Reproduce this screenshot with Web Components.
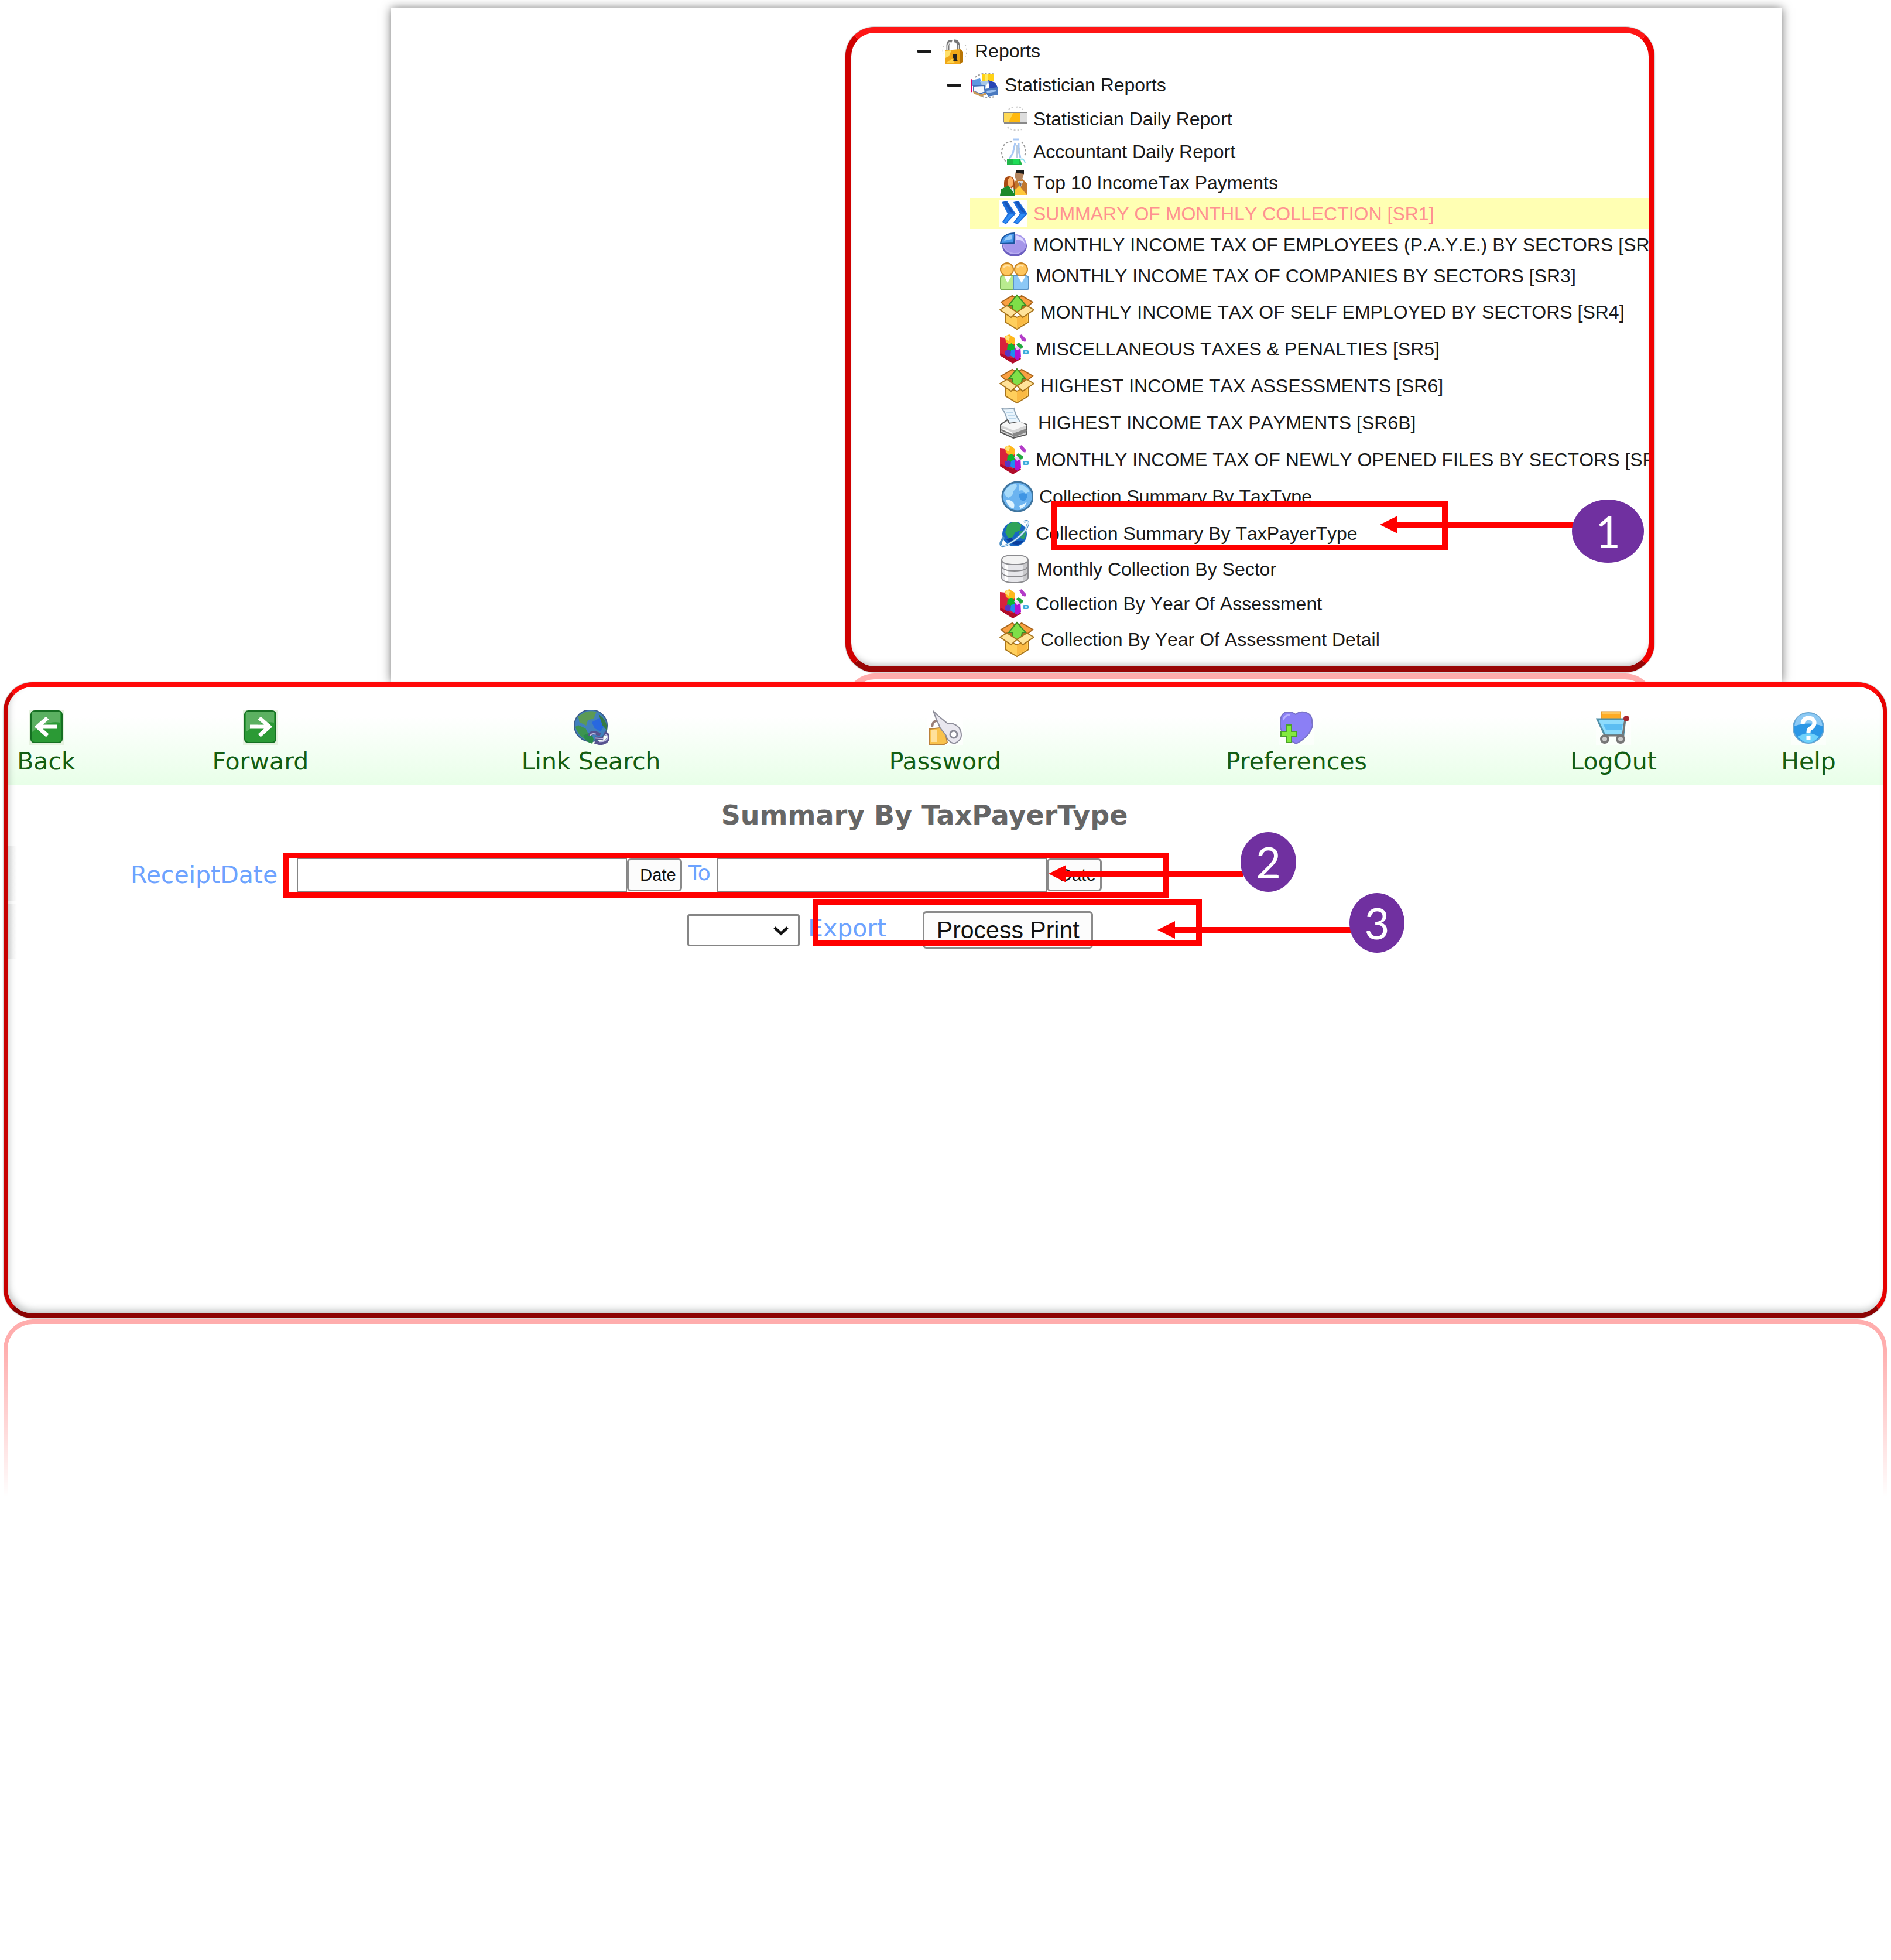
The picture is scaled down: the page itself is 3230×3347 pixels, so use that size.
<!DOCTYPE html>
<html lang="en">
<head>
<meta charset="utf-8">
<title>Summary By TaxPayerType</title>
<style>
html,body{margin:0;padding:0;background:#fff}
body{position:relative;min-height:100vh;font-family:"Liberation Sans",Arial,sans-serif;color:#1a1a1a}
</style>
</head>
<body>
<report-slide>
  <report-tree>
    <tree-row level="1" size="md" icon="lock">Reports</tree-row>
    <tree-row level="2" size="md" icon="stats">Statistician Reports</tree-row>
    <tree-row size="md" icon="card">Statistician Daily Report</tree-row>
    <tree-row size="sm" icon="flask">Accountant Daily Report</tree-row>
    <tree-row size="sm" icon="people">Top 10 IncomeTax Payments</tree-row>
    <tree-row size="sm" icon="chevrons" selected>SUMMARY OF MONTHLY COLLECTION [SR1]</tree-row>
    <tree-row size="sm" icon="pie">MONTHLY INCOME TAX OF EMPLOYEES (P.A.Y.E.) BY SECTORS [SR2]</tree-row>
    <tree-row size="sm" icon="couple">MONTHLY INCOME TAX OF COMPANIES BY SECTORS [SR3]</tree-row>
    <tree-row size="lg" icon="box" class="group">MONTHLY INCOME TAX OF SELF EMPLOYED BY SECTORS [SR4]</tree-row>
    <tree-row size="lg" icon="blocks">MISCELLANEOUS TAXES &amp; PENALTIES [SR5]</tree-row>
    <tree-row size="lg" icon="box">HIGHEST INCOME TAX ASSESSMENTS [SR6]</tree-row>
    <tree-row size="lg" icon="printer">HIGHEST INCOME TAX PAYMENTS [SR6B]</tree-row>
    <tree-row size="lg" icon="blocks">MONTHLY INCOME TAX OF NEWLY OPENED FILES BY SECTORS [SR</tree-row>
    <tree-row size="lg" icon="world">Collection Summary By TaxType</tree-row>
    <tree-row size="lg" icon="orbit">Collection Summary By TaxPayerType</tree-row>
    <tree-row size="db" icon="database">Monthly Collection By Sector</tree-row>
    <tree-row size="md" icon="blocks">Collection By Year Of Assessment</tree-row>
    <tree-row size="lg" icon="box">Collection By Year Of Assessment Detail</tree-row>
  </report-tree>
</report-slide>

<summary-panel>
  <tool-bar slot="tools">
    <tool-item icon="back">Back</tool-item>
    <tool-item icon="forward">Forward</tool-item>
    <tool-item icon="linksearch">Link Search</tool-item>
    <tool-item icon="password">Password</tool-item>
    <tool-item icon="heart">Preferences</tool-item>
    <tool-item icon="cart">LogOut</tool-item>
    <tool-item icon="help">Help</tool-item>
  </tool-bar>
  <summary-form>Summary By TaxPayerType</summary-form>
</summary-panel>

<mark-box style="left:1796px;top:856px;width:677px;height:84px"></mark-box>
<mark-arrow style="left:2357px;top:881px;width:332px"></mark-arrow>
<step-badge style="left:2685px;top:853px;width:123px;height:108px">1</step-badge>

<mark-box style="left:483px;top:1456px;width:1514px;height:78px"></mark-box>
<mark-arrow style="left:1791px;top:1477px;width:332px"></mark-arrow>
<step-badge style="left:2119px;top:1421px;width:95px;height:102px">2</step-badge>

<mark-box style="left:1388px;top:1536px;width:665px;height:79px"></mark-box>
<mark-arrow style="left:1977px;top:1573px;width:332px"></mark-arrow>
<step-badge style="left:2305px;top:1525px;width:94px;height:102px">3</step-badge>

<script>
/* Icon artwork: [width, height, markup]. */
const box = `<path d="M10 32v16l20 12 20-12V32L30 40z" fill="#ffcf5c" stroke="#a8741c" stroke-width="2"/>
<path d="M30 40v18l18-11V33z" fill="#f6ab33" opacity=".6"/>
<path d="M3 14 22 3l8 5 8-5 19 11-14 12H16z" fill="#f9a042" stroke="#a8651c" stroke-width="2"/>
<path d="M14 20 30 9l16 11-16 10z" fill="#b5742a"/>
<path d="M30 2 16 19h6l2 12h13l2-12h6z" fill="#7fdf48" stroke="#3c8c26" stroke-width="2"/>
<path d="M1 27l12-7 17 11-10 9zM59 27l-12-7-17 11 10 9z" fill="#ffe39a" stroke="#a8741c" stroke-width="2"/>`;
const blocks = `<path d="M1 6l10 1 15 9v31l-4 3L1 37z" fill="#d8213c"/><path d="M1 37l22 14 14-8-3-6-12 5L2 33z" fill="#b00d2a"/>
<path d="M10 4l7-3 9 6v10l-7 3-8-6z" fill="#ffb81c"/><path d="M13 2l5 3-2 7-6-3z" fill="#ffe37a"/>
<path d="M14 19l7-3 5 4v9l-7 3-6-4z" fill="#12b52c"/><path d="M10 29l6-2 4 3v8l-6 1-5-3z" fill="#5936c4"/>
<path d="M20 28l7-2 4 4v9l-7 2-5-4z" fill="#1f8cf0"/><path d="M26 25l10-2 1 17-6 5-5-3z" fill="#b312d0"/>
<path d="M34 3l4-2 8 9-2 4-5-2z" fill="#b33bc8"/><path d="M29 18l4-3 8 6-2 4-4 1z" fill="#21a83e"/>
<path d="M25 22l6-1 5 4-6 3z" fill="#f3c8ff"/><rect x="40" y="28" width="10" height="7" rx="2" fill="#3cabdc"/><rect x="43" y="30" width="4" height="3" fill="#a7e3f7"/>`;
const ICONS = {
lock:[48,46,`<path d="M12 23V13Q13 5 19 7M30 23V13Q29 5 23 6" fill="none" stroke="#777" stroke-width="5"/><path d="M12 22V14Q14 7 19 8M30 22V13" fill="none" stroke="#ddd" stroke-width="2"/>
<path d="M7 22l26-2 5 4v18l-6 3H8z" fill="#f0a818"/><path d="M8 23l10-1-4 10-6 3z" fill="#ffe06a"/><path d="M8 44l12-8 4 8z" fill="#ffd24a"/><path d="M33 20l5 4v18l-5 3z" fill="#b87505"/><circle cx="24" cy="32" r="4" fill="#222"/><path d="M23 33l-2 8h8l-3-8z" fill="#222"/><path d="M42 12q4 10 0 22M5 14q-3 6-1 14" fill="none" stroke="#aaa" stroke-dasharray="3 4"/>`],
stats:[48,46,`<path d="M8 10Q20 0 42 5M14 40q12 7 26 3" fill="none" stroke="#999" stroke-width="2" stroke-dasharray="3 3"/>
<rect x="20" y="4" width="19" height="12" fill="#ffd216"/><path d="M24 4h6v12h-6z" fill="#ffea62"/><path d="M2 15l14-3 4 9-4 5-13-1z" fill="#5d97e0"/><path d="M16 17h14l-6 14z" fill="#a7c7e8"/><path d="M30 15l12 4 5 10H32z" fill="#2846b4"/><path d="M1 13v22l2 1V14z" fill="#d06"/>
<path d="M5 25l18-1 2 11-9 3-11-4z" fill="#f4f8ff" stroke="#416fb9" stroke-width="2"/><path d="M22 30l24-3v13l-16 3z" fill="#4a79bf"/><path d="M4 33l14 6 8-3v4l-8 3-13-5z" fill="#c99a5a"/><path d="M27 33l17-2v3l-16 3z" fill="#9dc1ef"/>`],
card:[48,46,`<path d="M16 7Q20 1 26 5M28 3q8-2 12 4M14 37q8 8 24 4" fill="none" stroke="#ccc" stroke-width="2" stroke-dasharray="3 3"/><rect x="7" y="12" width="41" height="18" fill="#ddd"/><rect x="8" y="12" width="28" height="16" fill="#ffb90f"/><path d="M8 12h16l-8 16H8z" fill="#ffd955"/><path d="M48 12H7v16" fill="none" stroke="#888" stroke-width="2"/><path d="M8 30h40" stroke="#888" stroke-width="3"/>`],
flask:[48,46,`<path d="M22 6Q5 6 4 24q0 10 10 18M38 6q10 12 5 24" fill="none" stroke="#999" stroke-width="2" stroke-dasharray="4 3"/><path d="M24 2h10M27 8l-4 18-6 9M33 8v12l3 14" fill="none" stroke="#a8c8f5" stroke-width="3"/><path d="M30 12v22M35 16l-4 12" stroke="#bcd" stroke-width="2"/><path d="M13 35h22l4 10H13z" fill="#21b64a"/><path d="M24 36h10v8H24z" fill="#1fdc57"/><path d="M36 36q6-2 8 6" stroke="#8de" fill="none" stroke-width="2"/>`],
people:[48,46,`<path d="M28 4h14v4l-3 9-8 4-5-8z" fill="#b5865f"/><path d="M28 2h14v6l-14-2z" fill="#1b1b1b"/><path d="M26 20l14-3 7 7v20H28z" fill="#c1772e"/><path d="M31 20l5 12 5-12z" fill="#ddd"/><path d="M34 22l4 3-3 9z" fill="#667"/><path d="M26 36l8-8 13 16H27z" fill="#ffc83a"/>
<path d="M8 24q0-12 9-12 9 0 9 14v8l-18-4z" fill="#a94a12"/><ellipse cx="19" cy="22" rx="5" ry="8" fill="#ffb56b"/><path d="M3 34l12-6 5 5 6 1v11H1z" fill="#1d8a2c"/><path d="M16 28l5 5 3-4 1 12z" fill="#eaf6ff"/>`],
chevrons:[48,46,`<rect width="48" height="46" fill="#fff"/><path d="M4 3l9-2 15 22L11 41l-6-4 9-14z" fill="#1c6ddb"/><path d="M24 3l9-2 15 22-17 18-7-3 11-15z" fill="#1c6ddb"/><path d="M7 3l5-1 12 19-5-1zM27 3l5-1 12 19-5-1z" fill="#123f9c" opacity=".5"/><path d="M17 23l8 0-14 16-4-2zM37 23l8 0-14 16-4-2z" fill="#2f8cf5"/>`],
pie:[48,46,`<ellipse cx="26" cy="25" rx="21" ry="18" fill="#6c5fc0"/><ellipse cx="26" cy="22" rx="20" ry="17" fill="#b9aef0"/><path d="M28 5v17H7q2 13 18 15Q44 38 46 22 45 7 28 5z" fill="#a596ea"/><path d="M28 7q14 2 15 14-5-8-15-7z" fill="#ddd8ff"/><path d="M2 21Q4 4 26 3l-1 17z" fill="#4b9aec" stroke="#1b559f" stroke-width="2"/><path d="M8 16Q12 7 22 6v7z" fill="#9ccdf9"/>`],
couple:[52,48,`<path d="M2 28q0-4 4-4h18v23H3q-1 0-1-3z" fill="#b9eb8f" stroke="#78b054" stroke-width="2"/><path d="M24 47V24h21q5 0 5 5v15q0 3-2 3z" fill="#8cc8f6" stroke="#5a92c4" stroke-width="2"/><path d="M8 24l6 12 7-12z" fill="#fff"/><path d="M31 24l7 12 7-12z" fill="#fff"/><circle cx="13" cy="13" r="11" fill="#ffc65e" stroke="#c88626" stroke-width="2"/><circle cx="37" cy="13" r="11" fill="#ffc65e" stroke="#c88626" stroke-width="2"/><path d="M7 10q5-6 11-2M30 10q5-6 11-2" stroke="#ffe2a6" stroke-width="3" fill="none"/>`],
box:[60,62,box],
blocks:[52,52,blocks],
printer:[56,54,`<path d="M5 3q10 1 20-1 2 12 11 24l-22 4Q13 14 5 3z" fill="#eaf5fd" stroke="#90a4b5" stroke-width="2"/><path d="M12 10h12M14 15h12M16 20h13" stroke="#bcd8ec" stroke-width="2"/><path d="M2 30l12-8 3 6 16-2 14 4v17L24 53 2 43z" fill="#d4d4d4" stroke="#555" stroke-width="2"/><path d="M2 31l22 9 23-9-12-6-18 4-4-4z" fill="#f6f6f6"/><path d="M3 39l20 9 24-8" fill="none" stroke="#777" stroke-width="2"/><path d="M24 45l22-8v6l-22 9z" fill="#888"/><path d="M7 38l14 6" stroke="#fff" stroke-width="2"/>`],
world:[58,54,`<ellipse cx="31" cy="27" rx="26" ry="25" fill="#6cb4f0" stroke="#3f759f" stroke-width="3"/><path d="M8 20Q14 7 28 5q3 3 1 7l-5 6-2 7-6 4q-6-1-8-9z" fill="#a8dbfa"/><path d="M33 6q13 2 19 12l-7 4-6-6-6 1z" fill="#a8dbfa"/><path d="M11 32q8 0 13 5 3 5 0 11-11-5-13-16z" fill="#dff4ff"/><path d="M34 43q7-2 13-7-3 9-11 12z" fill="#dff4ff"/><path d="M33 23q8-4 14 0 2 8-6 12-7-2-8-12z" fill="#3f95e4"/>`],
orbit:[52,50,`<ellipse cx="26" cy="26" rx="21" ry="21" fill="#1766c4"/><path d="M14 10q12-9 24 0l-3 10-8 3-4 8-8 2-5-10z" fill="#2fa35a"/><path d="M34 22l10-3q3 8-2 16l-8-3z" fill="#2d9c6a"/><path d="M12 35q10 12 24 8l6-6q-12 4-22-5z" fill="#0a3f9e"/><path d="M42 5q8-3 7 3-3 14-21 27Q8 50 3 45q-3-4 5-14" fill="none" stroke="#4b8fc7" stroke-width="4"/><path d="M42 5q8-3 7 3-3 14-21 27Q8 50 3 45" fill="none" stroke="#d8ecfa" stroke-width="2"/>`],
database:[54,50,`<path d="M4 9v31q2 8 23 8t22-8V9z" fill="#e6e6ea"/><path d="M9 14v31l6 2V16z" fill="#fff"/><path d="M40 15v31l7-3V12z" fill="#c9c9cc"/><ellipse cx="26" cy="9" rx="22" ry="8" fill="#f3f3f3"/><path d="M4 9q0-8 22-8t23 8q-1 8-23 8T4 9v31q1 8 22 8t23-8V9M4 20q2 8 22 8t23-8M4 30q2 8 22 8t23-8" fill="none" stroke="#8b8b8f" stroke-width="2"/>`],
back:[60,60,`<rect x="1" y="0" width="59" height="60" fill="#e6f2e0"/><rect x="4" y="2" width="53" height="54" rx="6" fill="#2b9a35" stroke="#156f22" stroke-width="2"/><path d="M6 4h48v18Q30 18 6 38z" fill="#7cc07e" opacity=".6"/><path d="M48 29H15M32 14 15 29l17 15" fill="none" stroke="#fff" stroke-width="7"/>`],
forward:[60,60,`<rect x="0" y="0" width="59" height="60" fill="#e6f2e0"/><rect x="3" y="2" width="53" height="54" rx="6" fill="#2b9a35" stroke="#156f22" stroke-width="2"/><path d="M5 4h48v18Q30 18 5 38z" fill="#7cc07e" opacity=".6"/><path d="M12 29h33M28 14l17 15-17 15" fill="none" stroke="#fff" stroke-width="7"/>`],
linksearch:[62,62,`<ellipse cx="30" cy="28" rx="29" ry="28" fill="#4180bd" stroke="#3c5e8c" stroke-width="2"/><path d="M8 12q16-14 32-8l-5 12-10 2-3 10-12-6z" fill="#5c9a55"/><path d="M32 22l14-8 10 12-9 12-10-5z" fill="#2868e0"/><path d="M8 27l13 6 6 12-3 10Q7 46 3 30z" fill="#3c9450"/><path d="M44 8q16 10 14 28l-7-8z" fill="#357b45"/><path d="M17 45l14-5 4 12-2 8q-12-2-16-15z" fill="#2a8a4a"/><path d="M28 46q2-7 11-5l8 3M54 41q10 3 6 11-4 8-15 7l-8-2M38 50l14 1" fill="none" stroke="#57538f" stroke-width="6"/><path d="M29 46q2-5 10-3M55 43q7 3 4 8-4 6-14 5M38 50l14 1" fill="none" stroke="#c2bfe4" stroke-width="2"/>`],
password:[62,60,`<rect y="2" width="62" height="58" fill="#fff" opacity=".7"/><path d="M9 30Q10 18 18 19q10 0 9 14" fill="none" stroke="#9a7f78" stroke-width="4"/><path d="M5 33l25-3 5 26-5 3H5z" fill="#f9c24c" stroke="#b9823b" stroke-width="2"/><path d="M8 35h10v20H8z" fill="#ffe19a"/><path d="M11 2l7 7 17 14 10 1q14 5 14 20 0 8-12 14-12-4-14-14L23 31l-7-16z" fill="#e9e7ef" stroke="#8f8f9b" stroke-width="2"/><circle cx="46" cy="42" r="6" fill="#fff" stroke="#8a8a95" stroke-width="3"/>`],
heart:[60,60,`<rect y="0" width="60" height="60" fill="#fff" opacity=".5"/><path d="M3 20Q4 4 16 4q8 0 13 4 6-5 14-4 15 2 14 18l1 4Q55 44 30 58 6 46 3 30z" fill="#8b7ff5" stroke="#7a74c8" stroke-width="2"/><path d="M8 18Q10 8 20 9" stroke="#b6aeff" stroke-width="3" fill="none"/><path d="M14 26h8v11h9v9h-9v10h-8V46H4v-9h10z" fill="#83ea3f" stroke="#4aa329" stroke-width="2"/>`],
cart:[60,60,`<rect y="0" width="60" height="60" fill="#fff" opacity=".5"/><rect x="9" y="3" width="33" height="14" fill="#ffab24" stroke="#d9902e"/><path d="M10 4h31v4H10z" fill="#ffc65c"/><path d="M2 16h48l-3 27H15z" fill="#8edcfc" stroke="#5391a8" stroke-width="3"/><path d="M12 24h34l-2 10H17z" fill="#5cbdf2"/><path d="M46 42l4-27 5-1M14 44h34" stroke="#777" stroke-width="3" fill="none"/><circle cx="52" cy="15" r="5" fill="#a6262e"/><circle cx="15" cy="50" r="6" fill="#ccc" stroke="#777" stroke-width="4"/><circle cx="42" cy="50" r="6" fill="#ccc" stroke="#777" stroke-width="4"/>`],
help:[60,60,`<rect y="0" width="60" height="60" fill="#fff" opacity=".5"/><ellipse cx="30" cy="31" rx="26" ry="26" fill="#2b97e6" stroke="#6ba6cf" stroke-width="2"/><path d="M6 28Q8 7 30 6q22 1 24 22-24-9-48 0z" fill="#a5d6f7" opacity=".8"/><path d="M12 46q18-12 36 0-8 10-18 10t-18-10z" fill="#6fd2fb"/><path d="M20 24q1-10 11-10 10 1 9 10-1 5-7 8-3 2-3 7M30 45v6" fill="none" stroke="#fff" stroke-width="7"/>`]
};
const icon = n => { const [w,h,m] = ICONS[n]; return `<svg width="${w}" height="${h}" viewBox="0 0 ${w} ${h}" aria-hidden="true">${m}</svg>`; };
const define = (name, html) => customElements.define(name, class extends HTMLElement {
  constructor(){ super(); this.attachShadow({mode:"open"}); }
  connectedCallback(){ this.shadowRoot.innerHTML = typeof html === "function" ? html(this) : html; }
});

define("report-slide", `<style>
:host{display:block;padding:14px 186px 0 668px}
.sheet{padding:32px 218px 0 776px;box-shadow:0 0 16px rgba(0,0,0,.55);background:#fff;display:flow-root}
.mirror{height:17px;overflow:hidden}
.mirror div{margin-top:2px;height:80px;border:10px solid #ffadad;border-bottom:0;border-radius:50px 50px 0 0}
</style><div class="sheet"><slot></slot><div class="mirror"><div></div></div></div>`);

define("report-tree", `<style>
:host{display:block;overflow:hidden;background:#fff;border:10px solid;border-color:#ff1616 #f00000 #980606 #cf0000;border-radius:50px;padding:2px 0 15px;
box-shadow:inset 0 -10px 12px -8px rgba(0,0,0,.3),0 0 2px rgba(0,0,0,.6)}
::slotted(.group){margin-top:4px}
</style><slot></slot>`);

define("tree-row", el => { const lv = el.getAttribute("level"); return `<style>
:host{display:flex;align-items:center;gap:16px;font-size:32px;line-height:36px;font-kerning:none;white-space:nowrap;margin-left:202px;padding-left:51px}
:host([level="1"]){margin-left:113px;padding-left:0}
:host([level="2"]){margin-left:164px;padding-left:0}
:host([size="sm"]){height:53px}
:host([size="md"]){height:58px}
:host([size="db"]){height:60px}
:host([size="lg"]){height:63px}
:host([selected]){background:#ffffb3;--ink:#ff9191}
button{width:24px;height:24px;padding:0;border:0;background:none;display:flex;align-items:center}
button::before{content:"";width:24px;height:5px;background:#1a1a1a;border-radius:1px}
a{display:flex;align-items:center;gap:10px;color:var(--ink,#1a1a1a);text-decoration:none}
svg{display:block;flex:none}
</style>${lv ? '<button type="button" aria-label="Collapse"></button>' : ''}<a href="#">${icon(el.getAttribute("icon"))}<span><slot></slot></span></a>`; });

define("summary-panel", `<style>
:host{display:block;position:relative;padding:0 7px 0 6px}
.frame{position:relative;overflow:hidden;background:#fff;border:solid;border-width:8px 7px;border-color:#ff0808 #e60000 #8b0303 #c80000;border-radius:50px;box-shadow:0 0 2px rgba(0,0,0,.6)}
.frame::after{content:"";position:absolute;inset:0;border-radius:42px;pointer-events:none;box-shadow:inset 4px -8px 12px -2px rgba(60,70,70,.3)}
.mirror{height:296px;margin-top:2px;border:solid #ffadad;border-width:8px 7px 0;border-radius:50px 50px 0 0;-webkit-mask-image:linear-gradient(#000 15%,transparent);mask-image:linear-gradient(#000 15%,transparent)}
</style><div class="frame"><slot name="tools"></slot><slot></slot></div><div class="mirror"></div>`);

define("tool-bar", `<style>
:host{display:grid;grid-template-columns:132fr 600fr 530fr 680fr 520fr 564fr 102fr 76fr;padding:39px 0 16px;background:linear-gradient(#fff 30%,#e8ffe8)}
</style><slot></slot>`);

define("tool-item", el => `<style>
:host{display:flex;justify-content:center}
a{display:flex;flex-direction:column;align-items:center;gap:4px;font:41px/48px "DejaVu Sans",Verdana,sans-serif;color:#135e13;text-decoration:none;white-space:nowrap}
svg{display:block;height:60px}
</style><a href="#">${icon(el.getAttribute("icon"))}<span><slot></slot></span></a>`);

define("summary-form", `<style>
:host{display:block;padding-bottom:606px;font-family:"DejaVu Sans",Verdana,sans-serif}
h1{margin:0 71px 0 0;padding:26px 0;text-align:center;font-size:46px;line-height:53px;color:#666}
.row{box-sizing:border-box;display:flex;align-items:center;height:94px;background:linear-gradient(90deg,#e9e9e9,#fff 16px)}
.row + .row{margin-top:4px}
label{font-size:41px;line-height:48px;color:#6da3ff}
.dates{padding:4px 0 0 210px}
.dates label:first-child{width:284px}
.to{font-size:36px;padding:0 10px 6px 11px}
input{box-sizing:border-box;width:564px;height:58px;border:2px solid #858585;border-radius:0;background:#fff;padding:0 8px;font:29px "Liberation Sans",Arial,sans-serif}
button{box-sizing:border-box;font-family:"Liberation Sans",Arial,sans-serif;color:#111;background:#fcfcfc;border:3px solid #8a8a8a;border-radius:6px;padding:0}
.date{width:94px;height:56px;font-size:29px;padding-left:12px}
.actions{padding:0 0 4px 1161px}
.actions label{padding-bottom:6px}
.pick{position:relative;margin-right:14px}
select{display:block;box-sizing:border-box;width:192px;height:55px;border:3px solid #858585;border-radius:4px;background:#fff;appearance:none;font-size:29px}
.pick svg{position:absolute;right:18px;top:20px;pointer-events:none}
.go{width:291px;height:64px;font-size:41px;margin-left:62px}
</style>
<h1><slot></slot></h1>
<form onsubmit="return false">
<div class="row dates"><label for="from">ReceiptDate</label><input id="from" type="text"><button class="date" type="button">Date</button><label class="to" for="until">To</label><input id="until" type="text"><button class="date" type="button">Date</button></div>
<div class="row actions"><div class="pick"><select id="fmt"><option></option></select><svg width="28" height="17" viewBox="0 0 28 17"><path d="M3 3l11 10L25 3" fill="none" stroke="#111" stroke-width="5"/></svg></div><label for="fmt">Export</label><button class="go" type="submit">Process Print</button></div>
</form>`);

define("mark-box", `<style>:host{position:absolute;box-sizing:border-box;border:10px solid #f00;pointer-events:none}</style>`);
define("mark-arrow", `<style>:host{position:absolute;display:flex;align-items:center;height:30px;pointer-events:none}
i{width:30px;height:30px;background:#f00;clip-path:polygon(0 50%,100% 0,100% 100%)}
b{flex:1;height:10px;background:#f00}</style><i></i><b></b>`);
define("step-badge", `<style>:host{position:absolute;display:flex;align-items:center;justify-content:center;border-radius:50%;background:#7030a0;color:#fff;font:74px/1 Lato,"Open Sans",sans-serif}</style><slot></slot>`);
</script>
</body>
</html>
